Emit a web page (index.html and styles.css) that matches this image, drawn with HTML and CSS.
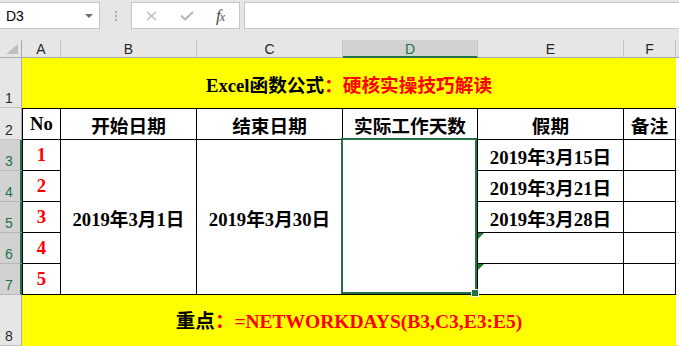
FILE: index.html
```html
<!DOCTYPE html>
<html lang="zh-CN">
<head>
<meta charset="utf-8">
<title>Excel</title>
<link rel="stylesheet" href="styles.css">
</head>
<body>
<div class="fbar">
  <div class="namebox"><span>D3</span><span class="nb-arrow"></span></div>
  <div class="grip"><i></i><i></i><i></i></div>
  <div class="fnbox">
    <svg class="ic-x" width="11" height="10" viewBox="0 0 11 10"><path d="M1 1L10 9M10 1L1 9" stroke="#b8b8b8" stroke-width="1.3" fill="none"/></svg>
    <svg class="ic-ok" width="14" height="10" viewBox="0 0 14 10"><path d="M1 4.5L5 8.5L13 1" stroke="#b8b8b8" stroke-width="2" fill="none"/></svg>
    <span class="fx">f<small>x</small></span>
  </div>
  <div class="finput"></div>
</div>
<div class="sheet">
  <div class="corner"><span class="tri"></span></div>
  <div class="ch">A</div>
  <div class="ch">B</div>
  <div class="ch">C</div>
  <div class="ch sel">D</div>
  <div class="ch">E</div>
  <div class="ch">F</div>
  <div class="ch last"></div>

  <div class="rh">1</div>
  <div class="banner">Excel函数公式<span class="red">：硬核实操技巧解读</span></div>
  <div class="g"></div>

  <div class="rh">2</div>
  <div class="td hd first">No</div>
  <div class="td hd">开始日期</div>
  <div class="td hd">结束日期</div>
  <div class="td hd">实际工作天数</div>
  <div class="td hd">假期</div>
  <div class="td hd">备注</div>
  <div class="g"></div>

  <div class="rh sel">3</div>
  <div class="td first red">1</div>
  <div class="td merge">2019年3月1日</div>
  <div class="td merge">2019年3月30日</div>
  <div class="td merge dsel"><div class="sel-box"><span class="handle"></span></div></div>
  <div class="td">2019年3月15日</div>
  <div class="td"></div>
  <div class="g"></div>

  <div class="rh sel">4</div>
  <div class="td first red">2</div>
  <div class="td">2019年3月21日</div>
  <div class="td"></div>
  <div class="g"></div>

  <div class="rh sel">5</div>
  <div class="td first red">3</div>
  <div class="td">2019年3月28日</div>
  <div class="td"></div>
  <div class="g"></div>

  <div class="rh sel">6</div>
  <div class="td first red">4</div>
  <div class="td err"></div>
  <div class="td"></div>
  <div class="g"></div>

  <div class="rh sel">7</div>
  <div class="td first red">5</div>
  <div class="td err"></div>
  <div class="td"></div>
  <div class="g"></div>

  <div class="rh">8</div>
  <div class="banner foot">重点<span class="red">：=NETWORKDAYS(B3,C3,E3:E5)</span></div>
  <div class="g"></div>
</div>
</body>
</html>
```
FILE: styles.css
```css
* { box-sizing: border-box; margin: 0; padding: 0; }
html, body { width: 679px; height: 346px; overflow: hidden; background: #fff; }
body { font-family: "Liberation Serif", "Noto Sans CJK SC", serif; }

.fbar { display: flex; align-items: flex-start; height: 40px; padding-top: 2px; background: #e6e6e6; }
.namebox { display: flex; align-items: center; width: 100px; height: 27px; padding-left: 6px; background: #fff; border: 1px solid #c6c6c6; border-left: 0; font: 14px "Liberation Sans", sans-serif; color: #000; }
.nb-arrow { margin-left: auto; margin-right: 6px; width: 0; height: 0; border-left: 4px solid transparent; border-right: 4px solid transparent; border-top: 4px solid #6d6d6d; }
.grip { display: flex; flex-direction: column; align-items: center; gap: 2px; width: 31px; height: 27px; padding-top: 9px; }
.grip i { display: block; width: 2px; height: 2px; background: #ababab; }
.fnbox { display: flex; align-items: center; width: 109px; height: 27px; padding-left: 14px; background: #fff; border: 1px solid #c6c6c6; }
.ic-x { margin-top: 1px; }
.ic-ok { margin-left: 23px; margin-top: 1px; }
.fx { margin-left: 22px; font: italic 17px "Liberation Serif", serif; color: #4a4a4a; letter-spacing: -1px; }
.fx small { font-size: 12px; }
.finput { flex: 1; height: 27px; margin-left: 4px; background: #fff; border: 1px solid #c6c6c6; border-right: 0; }

.sheet { display: grid; grid-template-columns: 22px 39px 136px 146px 135px 146px 52px 1fr; grid-template-rows: 18px 50px 32px repeat(5, 31px) 1fr; height: 306px; }

.corner { display: flex; justify-content: flex-end; align-items: flex-end; padding: 0 3px 3px 0; background: #e6e6e6; border-right: 1px solid #ababab; border-bottom: 1px solid #ababab; }
.tri { width: 0; height: 0; border-left: 12px solid transparent; border-bottom: 10px solid #bfbfbf; }
.ch { display: flex; align-items: center; justify-content: center; padding-top: 1px; background: #e6e6e6; border-right: 1px solid #c3c3c3; border-bottom: 1px solid #ababab; font: 14px "Liberation Sans", sans-serif; color: #262626; }
.ch.sel { background: #d2d2d2; color: #217346; border-bottom: 2px solid #217346; }
.ch.last { border-right: 0; }

.rh { display: flex; align-items: flex-end; padding: 0 0 2px 5px; background: #e6e6e6; border-right: 1px solid #ababab; border-bottom: 1px solid #c3c3c3; font: 14px/14px "Liberation Sans", sans-serif; color: #262626; }
.rh.sel { background: #d2d2d2; color: #217346; border-right: 2px solid #217346; border-bottom-color: #b8b8b8; }

.banner { grid-column: 2 / 8; display: flex; align-items: center; justify-content: center; background: #ff0; font-size: 18.67px; font-weight: 700; color: #000; }
.foot { padding-bottom: 2px; font-size: 19.5px; }
.red { color: #f00; }
.g { border-bottom: 1px solid #dadada; }

.td { display: flex; align-items: center; justify-content: center; background: #fff; border-right: 1px solid #000; border-bottom: 1px solid #000; font-size: 18.67px; font-weight: 700; color: #000; }
.td.red { color: #f00; }
.hd { border-top: 1px solid #000; }
.first { border-left: 1px solid #000; }
.merge { grid-row: span 5; }
.dsel { position: relative; }
.sel-box { position: absolute; top: -2px; left: -2px; right: 0; bottom: 0; z-index: 2; border: 2px solid #217346; }
.handle { position: absolute; right: -3px; bottom: -4px; width: 6px; height: 6px; background: #217346; box-shadow: 0 0 0 1px #fff; }
.err { position: relative; }
.err::before { content: ""; position: absolute; top: 0; left: 0; width: 0; height: 0; border-top: 6px solid #1d7a2f; border-right: 6px solid transparent; }
```
